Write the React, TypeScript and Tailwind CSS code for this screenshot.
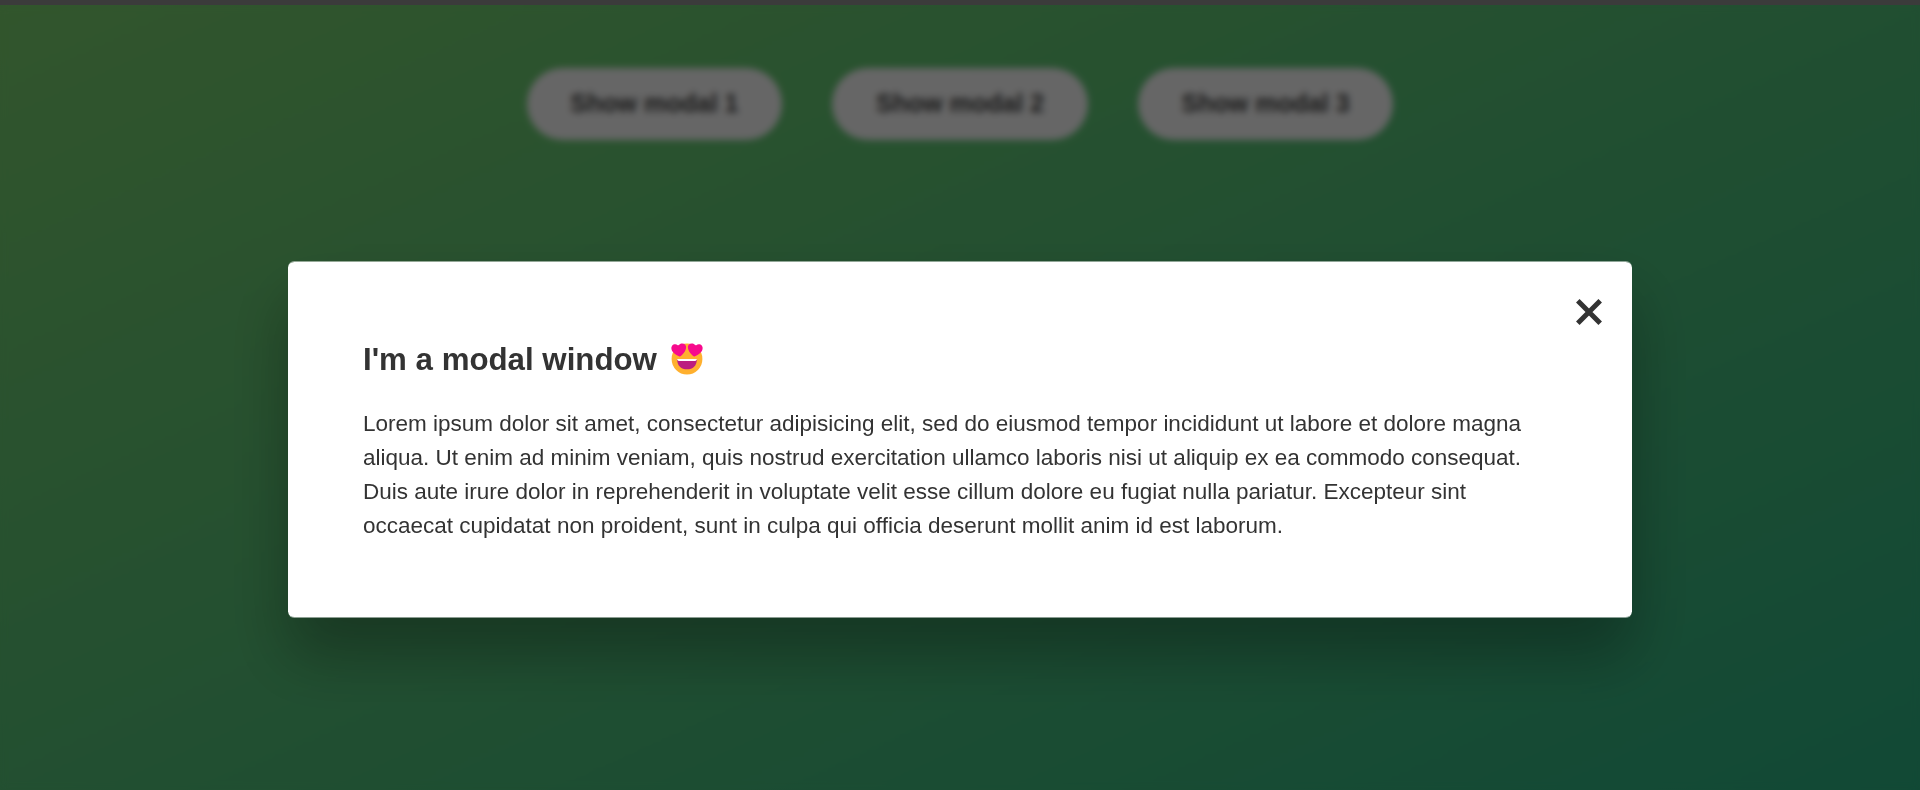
const labels = ["Show modal 1", "Show modal 2", "Show modal 3"];

function HeartEyes() {
  return (
    <svg viewBox="0 0 32 32" className="ml-[14px] block h-8 w-8 shrink-0 -translate-y-px" role="img" aria-label="Smiling face with heart eyes">
      <circle cx="16" cy="16" r="15.400" fill="#ffb02e" />
      <path d="M6.200 16.500h19.600c0 6.500-4 9.800-9.800 9.800s-9.800-3.300-9.800-9.800Z" fill="#bb1d80" />
      <path d="M6.200 16.100h19.600c0 1.200-.7 1.800-1.700 1.800H7.900c-1 0-1.700-.6-1.700-1.800Z" fill="#fff" />
      <path d="M8.200 1.700c1.300-1.500 4.200-1.800 5.800-.2 1.400 1.400 1.300 3.600.6 5.200-.9 2.200-2.500 4.400-4.700 6.300-.5.500-1.300.6-1.900.2C5.100 12 2.500 10.200 1.100 8 .3 6.500-.1 4.300 1.100 2.700 2.500 1 5.300.8 6.700 2.300c.5-.1 1-.2 1.500-.6Z" fill="#f70a8d" />
      <path d="M23.800 1.700c-1.300-1.500-4.200-1.800-5.800-.2-1.400 1.400-1.300 3.600-.6 5.200.9 2.200 2.500 4.400 4.700 6.300.5.500 1.300.6 1.900.2 2.900-1.200 5.500-3 6.900-5.200.8-1.500 1.200-3.700 0-5.300-1.400-1.700-4.200-1.900-5.600-.4-.5-.1-1-.2-1.500-.6Z" fill="#f70a8d" />
    </svg>
  );
}

export default function App() {
  return (
    <div className="h-[790px] overflow-hidden bg-[#3b3b3b] pt-[5px] font-['Liberation_Sans',Arial,sans-serif] text-[#333]">
      <div className="relative h-[869px] bg-[linear-gradient(to_top_left,#28b487,#7dd56f)]">
        <div className="flex items-start justify-center gap-[50px] pt-[62.5px]">
          {labels.map((label) => (
            <button key={label} className="rounded-full bg-white px-[43.75px] pt-[21px] pb-[23px] text-[25px] leading-[28px] font-semibold text-[#444]">
              {label}
            </button>
          ))}
        </div>
        <div className="absolute inset-0 flex items-center justify-center bg-black/60 backdrop-blur-[3.75px]">
          <section
            role="dialog"
            className="relative h-[357px] w-[1344px] rounded-[6.25px] border-y border-white/50 bg-white bg-clip-padding px-[75px] pt-[74px] shadow-[0_37.5px_62.5px_rgba(0,0,0,0.3)]"
          >
            <button aria-label="Close" className="absolute top-[36px] right-[29px] h-7 w-7">
              <svg viewBox="0 0 28 28" className="block h-7 w-7" fill="none" stroke="#333" strokeWidth="5">
                <path d="M2.800 2.800 25.200 25.200M25.200 2.800 2.800 25.200" />
              </svg>
            </button>
            <h1 className="mb-[23px] flex h-[48px] items-center text-[31.25px] leading-[48px] font-bold">
              I'm a modal window
              <HeartEyes />
            </h1>
            <p className="text-[22.5px] leading-[34px]">
              Lorem ipsum dolor sit amet, consectetur adipisicing elit, sed do eiusmod tempor incididunt ut labore et dolore magna aliqua. Ut enim ad minim veniam, quis nostrud exercitation ullamco laboris nisi ut aliquip ex ea commodo consequat. Duis aute irure dolor in reprehenderit in voluptate velit esse cillum dolore eu fugiat nulla pariatur. Excepteur sint occaecat cupidatat non proident, sunt in culpa qui officia deserunt mollit anim id est laborum.
            </p>
          </section>
        </div>
      </div>
    </div>
  );
}
